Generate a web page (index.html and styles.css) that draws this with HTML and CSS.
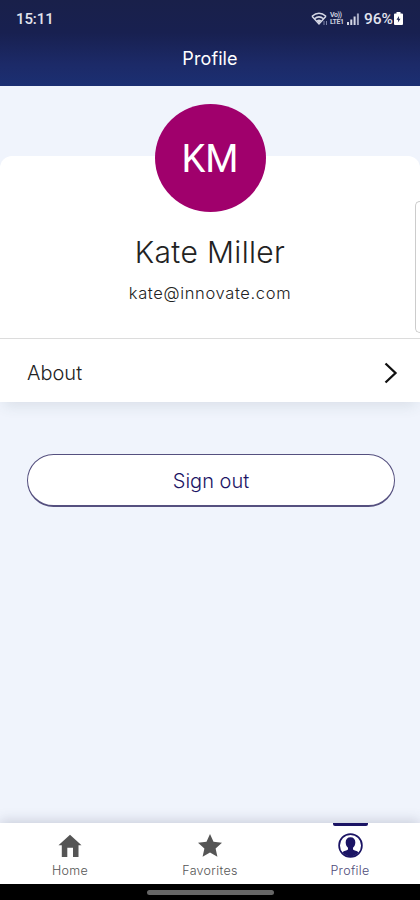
FILE: index.html
```
<!DOCTYPE html>
<html lang="en">
<head>
    <meta charset="UTF-8">
    <meta name="viewport" content="width=device-width, initial-scale=1.0">
    <title>Profile</title>
    <link rel="stylesheet" href="styles.css">
</head>
<body>
    <div class="app">
        <header class="header">
            <div class="status-bar">
                <span class="time">15:11</span>
                <div class="status-icons">
                    <svg class="wifi" width="17" height="14" viewBox="0 0 17 14" fill="none" stroke="#d5d8e6" stroke-width="1.5">
                        <path d="M1 4.2Q8 -1.8 15 4.2M3.5 6.8Q8 3 12.5 6.8M1 4.2L8 12L15 4.2"/>
                        <path d="M5.6 8.4Q8 6.4 10.4 8.4L8 11.4Z" fill="#d5d8e6" stroke="none"/>
                        <path d="M13 9v4M15.500 9v4" stroke="#7c83a8" stroke-width="1"/>
                    </svg>
                    <div class="volte"><span>Vo))</span><span>LTE1</span></div>
                    <svg class="signal" width="12" height="12" viewBox="0 0 12 12" fill="#d5d8e6">
                        <path d="M0 9h2v3H0zM3.3 6.5h2V12h-2zM6.6 3.5h2V12h-2z"/>
                        <path d="M9.9 0.5h2V12h-2z" fill="#a3a8c2"/>
                    </svg>
                    <span class="percent">96%</span>
                    <svg class="battery" width="9" height="13" viewBox="0 0 9 13">
                        <path d="M2.5 0h4v1.5H8a1 1 0 0 1 1 1V12a1 1 0 0 1-1 1H1a1 1 0 0 1-1-1V2.500a1 1 0 0 1 1-1h1.500z" fill="#fff"/>
                        <path d="M5 4L2.500 7.700h1.700L3.900 10.500 6.500 6.700H4.800z" fill="#18204c"/>
                    </svg>
                </div>
            </div>
            <h1 class="title">Profile</h1>
        </header>

        <main class="content">
            <section class="card">
                <div class="avatar">KM</div>
                <h2 class="name">Kate Miller</h2>
                <p class="email">kate@innovate.com</p>
                <a class="about" href="#">
                    <span>About</span>
                    <svg width="14" height="22" viewBox="0 0 14 22" fill="none" stroke="#111" stroke-width="2.300">
                        <path d="M1.500 1.500L11.500 11L1.500 20.500"/>
                    </svg>
                </a>
                <div class="edge-handle"></div>
            </section>
            <button class="sign-out">Sign out</button>
        </main>

        <nav class="tabs">
            <a class="tab" href="#">
                <svg width="24" height="24" viewBox="0 0 24 24" fill="#555">
                    <path d="M12 .8L23.500 11.300H20.500V23H15V13.800H9.300V23H3.800V11.300H.5Z"/>
                </svg>
                <span>Home</span>
            </a>
            <a class="tab" href="#">
                <svg width="24" height="24" viewBox="0 0 24 24" fill="#555">
                    <path d="M12 0L15.500 7.800 24 8.700 17.600 14.400 19.400 22.800 12 18.500 4.600 22.800 6.400 14.400 0 8.700 8.500 7.800Z"/>
                </svg>
                <span>Favorites</span>
            </a>
            <a class="tab active" href="#">
                <svg width="25" height="25" viewBox="0 0 25 25">
                    <circle cx="12.500" cy="12.500" r="11.400" fill="#fff" stroke="#1b1464" stroke-width="1.700"/>
                    <path d="M12.500 4.200C15.800 4.200 17.500 6.500 17.300 9.700C17.200 12 16.300 13.600 15 14.800V16.600C16.200 17.600 19 17.800 20.600 19.500A10.800 10.800 0 0 1 4.400 19.500C6 17.800 8.800 17.600 10 16.600V14.800C8.700 13.600 7.800 12 7.700 9.700C7.500 6.500 9.200 4.200 12.500 4.200Z" fill="#1b1464"/>
                </svg>
                <span>Profile</span>
            </a>
        </nav>

        <div class="gesture-bar"><div class="pill"></div></div>
    </div>
</body>
</html>
```
FILE: styles.css
```
* {
    box-sizing: border-box;
}
body {
    margin: 0;
    font-family: Inter, Roboto, sans-serif;
    font-weight: 300;
    color: #222;
}
h1, h2, p {
    margin: 0;
    font-weight: 300;
}
a {
    color: inherit;
    text-decoration: none;
}
.app {
    display: flex;
    flex-direction: column;
    height: 900px;
    width: 420px;
    overflow: hidden;
    background: #f0f4fc;
}
.header {
    height: 86px;
    background: linear-gradient(#19204a 0%, #182050 38%, #1c2a68 75%, #1b2f72 100%);
    color: #fff;
}
.status-bar {
    display: flex;
    justify-content: space-between;
    align-items: center;
    height: 37px;
    padding: 0 17px 0 16px;
    font-family: Roboto, sans-serif;
    font-weight: 500;
    font-size: 15px;
    color: #e2e4ee;
}
.time {
    font-size: 15px;
    letter-spacing: -0.1px;
}
.status-icons {
    display: flex;
    align-items: center;
}
.volte {
    display: flex;
    flex-direction: column;
    width: 14px;
    margin: 0 3px 0 2px;
    font-size: 7px;
    line-height: 6.5px;
    font-weight: 700;
    letter-spacing: -0.4px;
    color: #c9cddd;
}
.percent {
    margin: 0 1px 0 5px;
    font-size: 15.5px;
}
.title {
    font-size: 18px;
    line-height: 22px;
    margin-top: 11px;
    font-weight: 400;
    letter-spacing: 0.1px;
    text-align: center;
}
.content {
    flex: 1;
    padding-top: 70px;
}
.card {
    position: relative;
    display: flex;
    flex-direction: column;
    align-items: center;
    height: 246px;
    background: #fff;
    border-radius: 12px 12px 0 0;
    box-shadow: 0 8px 14px -4px rgba(60, 80, 90, 0.12);
}
.avatar {
    width: 111px;
    height: 108px;
    margin-top: -52px;
    border-radius: 50%;
    background: #a0006c;
    color: #fff;
    font-family: Roboto, sans-serif;
    font-weight: 400;
    font-size: 38px;
    line-height: 111px;
    text-align: center;
}
.name {
    margin-top: 21px;
    font-size: 30px;
    line-height: 38px;
    letter-spacing: 0.35px;
}
.email {
    margin-top: 12px;
    font-size: 16.5px;
    line-height: 20px;
    letter-spacing: 0.65px;
}
.about {
    display: flex;
    justify-content: space-between;
    align-items: center;
    width: 100%;
    height: 64px;
    margin-top: auto;
    padding: 4px 22px 0 27px;
    border-top: 1.5px solid #dcdcdc;
    font-size: 20px;
}
.edge-handle {
    position: absolute;
    right: 0;
    top: 45px;
    width: 5px;
    height: 132px;
    border: 1.5px solid #ccc;
    border-right: none;
    border-radius: 5px 0 0 5px;
}
.sign-out {
    display: block;
    width: 368px;
    height: 53px;
    margin: 52px 0 0 27px;
    padding: 1px 0 0;
    border: 1px solid #55507f;
    border-bottom-width: 2px;
    border-radius: 27px;
    background: #fff;
    color: #1b1464;
    font-family: inherit;
    font-weight: 300;
    font-size: 20px;
}
.tabs {
    position: relative;
    display: flex;
    height: 61px;
    background: #fff;
    box-shadow: 0 -2px 12px rgba(60, 65, 95, 0.22);
}
.tab {
    position: relative;
    flex: 1;
    display: flex;
    flex-direction: column;
    align-items: center;
    justify-content: flex-end;
    padding-bottom: 5px;
    font-size: 12.5px;
    line-height: 16px;
    letter-spacing: 0.3px;
    color: #555;
}
.tab svg {
    margin-bottom: 5px;
}
.active {
    color: #4e4a78;
}
.active::before {
    content: "";
    position: absolute;
    top: 0;
    width: 35px;
    height: 3px;
    background: #1b1464;
    border-radius: 0 0 2px 2px;
}
.gesture-bar {
    position: relative;
    height: 16px;
    padding-top: 6px;
    background: #000;
}
.pill {
    width: 127px;
    height: 5px;
    margin: 0 auto;
    border-radius: 3px;
    background: #666;
}
```
